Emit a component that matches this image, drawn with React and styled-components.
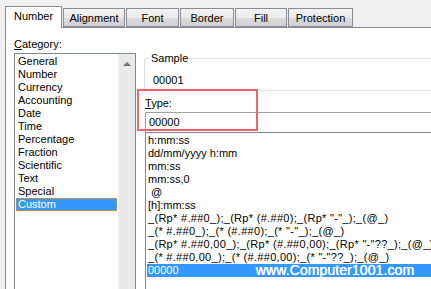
import styled, { createGlobalStyle } from "styled-components";

const GlobalStyle = createGlobalStyle`
  html, body {
    margin: 0;
    padding: 0;
    background: #f0f0f0;
  }
  body {
    font-family: "Liberation Sans", Arial, sans-serif;
    font-size: 11px;
    color: #000;
  }
`;

const tabs = [
  { label: "Number", width: 57, active: true },
  { label: "Alignment", width: 62 },
  { label: "Font", width: 53 },
  { label: "Border", width: 54 },
  { label: "Fill", width: 52 },
  { label: "Protection", width: 65 },
];

const categories = [
  "General",
  "Number",
  "Currency",
  "Accounting",
  "Date",
  "Time",
  "Percentage",
  "Fraction",
  "Scientific",
  "Text",
  "Special",
  "Custom",
];

const formats = [
  "h:mm:ss",
  "dd/mm/yyyy h:mm",
  "mm:ss",
  "mm:ss,0",
  " @",
  "[h]:mm:ss",
  '_(Rp* #.##0_);_(Rp* (#.##0);_(Rp* "-"_);_(@_)',
  '_(* #.##0_);_(* (#.##0);_(* "-"_);_(@_)',
  '_(Rp* #.##0,00_);_(Rp* (#.##0,00);_(Rp* "-"??_);_(@_)',
  '_(* #.##0,00_);_(* (#.##0,00);_(* "-"??_);_(@_)',
];

export default function App() {
  return (
    <Page>
      <GlobalStyle />
      <TabStrip>
        {tabs.map((t) => (
          <Tab key={t.label} $width={t.width} $active={t.active}>
            {t.label}
          </Tab>
        ))}
      </TabStrip>
      <Panel>
        <LeftColumn>
          <FieldLabel>
            <u>C</u>ategory:
          </FieldLabel>
          <CategoryBox>
            <CategoryItems>
              {categories.map((c) => (
                <CategoryItem key={c} $selected={c === "Custom"}>
                  {c}
                </CategoryItem>
              ))}
            </CategoryItems>
            <ScrollTrack>
              <UpArrow />
            </ScrollTrack>
          </CategoryBox>
        </LeftColumn>
        <RightColumn>
          <GroupBox>
            <Legend>Sample</Legend>
            <SampleValue>00001</SampleValue>
          </GroupBox>
          <TypeGroup>
            <Highlight />
            <FieldLabel>
              <u>T</u>ype:
            </FieldLabel>
            <TypeInput>00000</TypeInput>
          </TypeGroup>
          <FormatList>
            {formats.map((f, i) => (
              <FormatItem key={i} $code={f.includes("#")}>
                {f}
              </FormatItem>
            ))}
            <FormatItem $selected>
              <span>00000</span>
              <Watermark>www.Computer1001.com</Watermark>
            </FormatItem>
          </FormatList>
        </RightColumn>
      </Panel>
    </Page>
  );
}

const Page = styled.div`
  width: 431px;
  height: 289px;
  overflow: hidden;
  padding: 6px 0 0 5px;
  box-sizing: border-box;
  display: flex;
  flex-direction: column;
`;

const TabStrip = styled.div`
  display: flex;
  align-items: flex-end;
  gap: 1px;
  height: 21px;
  position: relative;
  z-index: 1;
`;

const Tab = styled.div`
  width: ${(p) => p.$width}px;
  height: ${(p) => (p.$active ? 22 : 19)}px;
  margin-bottom: ${(p) => (p.$active ? -1 : 0)}px;
  box-sizing: border-box;
  border: 1px solid #898c95;
  border-bottom: ${(p) => (p.$active ? "none" : "1px solid #898c95")};
  background: ${(p) =>
    p.$active
      ? "#ffffff"
      : "linear-gradient(to bottom, #f2f2f2 0%, #ebebeb 50%, #dddddd 51%, #cfcfcf 100%)"};
  display: flex;
  align-items: center;
  justify-content: center;
  padding-bottom: ${(p) => (p.$active ? 3 : 0)}px;
  color: #000;
`;

const Panel = styled.div`
  flex: 1;
  background: #fff;
  border-top: 1px solid #898c95;
  border-left: 1px solid #898c95;
  display: flex;
  padding-left: 8px;
  min-height: 0;
`;

const LeftColumn = styled.div`
  display: flex;
  flex-direction: column;
  width: 122px;
  padding-top: 10px;
`;

const FieldLabel = styled.div`
  line-height: 13px;
  height: 13px;
  margin-bottom: 2px;
  u {
    text-decoration: underline;
    text-underline-offset: 1px;
  }
`;

const CategoryBox = styled.div`
  flex: 1;
  border: 1px solid #828790;
  border-bottom: none;
  display: flex;
  min-height: 0;
`;

const CategoryItems = styled.div`
  flex: 1;
  padding: 1px 1px 0 1px;
`;

const CategoryItem = styled.div`
  height: 13px;
  line-height: 13px;
  padding-left: 2px;
  box-sizing: border-box;
  color: ${(p) => (p.$selected ? "#fff" : "#000")};
  background: ${(p) => (p.$selected ? "#3399ff" : "transparent")};
  outline: ${(p) => (p.$selected ? "1px dotted #d89a50" : "none")};
  outline-offset: -1px;
`;

const ScrollTrack = styled.div`
  width: 17px;
  background: #e9e9e9;
  border-left: 1px solid #f2f2f2;
  display: flex;
  justify-content: center;
  padding-top: 8px;
  box-sizing: border-box;
`;

const UpArrow = styled.div`
  width: 0;
  height: 0;
  border-left: 4px solid transparent;
  border-right: 4px solid transparent;
  border-bottom: 4px solid #707070;
`;

const RightColumn = styled.div`
  flex: 1;
  margin-left: 9px;
  display: flex;
  flex-direction: column;
  min-width: 0;
`;

const GroupBox = styled.div`
  position: relative;
  margin-top: 30px;
  margin-left: -1px;
  height: 31px;
  border: 1px solid #d5dfe5;
  border-right: none;
  border-radius: 3px 0 0 3px;
`;

const Legend = styled.span`
  position: absolute;
  top: -7px;
  left: 4px;
  padding: 0 2px;
  background: #fff;
  line-height: 13px;
`;

const SampleValue = styled.div`
  line-height: 13px;
  padding: 15px 0 0 8px;
`;

const TypeGroup = styled.div`
  position: relative;
  padding-top: 6px;
`;

const Highlight = styled.div`
  position: absolute;
  left: -8px;
  top: -2px;
  width: 121px;
  height: 42px;
  box-sizing: border-box;
  border: 2px solid #ef6464;
  pointer-events: none;
`;

const TypeInput = styled.div`
  height: 20px;
  box-sizing: border-box;
  border-top: 1px solid #a0a0a0;
  border-left: 1px solid #a0a0a0;
  line-height: 19px;
  padding-left: 3px;
`;

const FormatList = styled.div`
  flex: 1;
  border-top: 1px solid #828790;
  border-left: 1px solid #828790;
  padding: 1px 0 0 1px;
  overflow: hidden;
`;

const FormatItem = styled.div`
  height: 13px;
  line-height: 13px;
  padding-left: 1px;
  white-space: pre;
  display: flex;
  align-items: center;
  letter-spacing: ${(p) => (p.$code ? "0.3px" : "0")};
  color: ${(p) => (p.$selected ? "#fff" : "#000")};
  background: ${(p) => (p.$selected ? "#3399ff" : "transparent")};
`;

const Watermark = styled.span`
  margin-left: 77px;
  font-size: 14px;
  letter-spacing: 0.1px;
  color: #fff;
  text-shadow: 0.4px 0 0 #fff;
`;
